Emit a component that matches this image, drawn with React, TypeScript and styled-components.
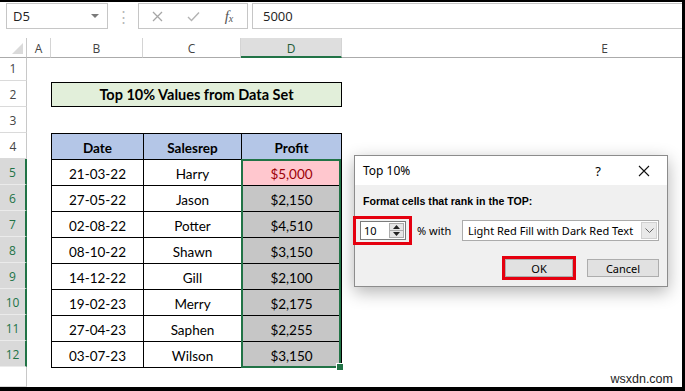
import styled, { createGlobalStyle } from "styled-components";

const GlobalStyle = createGlobalStyle`
  html, body {
    margin: 0;
    padding: 0;
    background: #000;
  }
  * {
    box-sizing: border-box;
  }
`;

const columns = [
  { label: "A", active: false },
  { label: "B", active: false },
  { label: "C", active: false },
  { label: "D", active: true },
  { label: "E", active: false },
];

const records = [
  { date: "21-03-22", rep: "Harry", profit: "$5,000", top: true },
  { date: "27-05-22", rep: "Jason", profit: "$2,150", top: false },
  { date: "02-08-22", rep: "Potter", profit: "$4,510", top: false },
  { date: "08-10-22", rep: "Shawn", profit: "$3,150", top: false },
  { date: "14-12-22", rep: "Gill", profit: "$2,100", top: false },
  { date: "19-02-23", rep: "Merry", profit: "$2,175", top: false },
  { date: "27-04-23", rep: "Saphen", profit: "$2,255", top: false },
  { date: "03-07-23", rep: "Wilson", profit: "$3,150", top: false },
];

const rowNumbers = Array.from({ length: 12 }, (_, i) => i + 1);

const App = () => {
  return (
    <Frame>
      <GlobalStyle />
      <Screen>
        {/* name box + formula bar */}
        <FormulaBar>
          <NameBox>
            <span>D5</span>
            <DropArrow />
          </NameBox>
          <Grip>⋮</Grip>
          <FxGroup>
            <FxSlot>
              <svg width="11" height="11" viewBox="0 0 11 11">
                <path d="M1 1 L10 10 M10 1 L1 10" stroke="#a6a6a6" strokeWidth="1.3" />
              </svg>
            </FxSlot>
            <FxSlot>
              <svg width="13" height="11" viewBox="0 0 13 11">
                <path d="M1 6 L4.5 9.5 L12 1.5" stroke="#b3b3b3" strokeWidth="1.4" fill="none" />
              </svg>
            </FxSlot>
            <FxSlot>
              <FxText>
                f<sub>x</sub>
              </FxText>
            </FxSlot>
          </FxGroup>
          <FormulaInput>5000</FormulaInput>
        </FormulaBar>

        {/* worksheet */}
        <Sheet>
          <Corner>
            <svg width="11" height="11" viewBox="0 0 11 11">
              <polygon points="0,11 11,0 11,11" fill="#dadada" />
            </svg>
          </Corner>
          {columns.map((c) => (
            <ColHeader key={c.label} $active={c.active}>
              {c.label}
            </ColHeader>
          ))}

          {rowNumbers.map((n) => (
            <RowHeader key={n} $row={n + 1} $active={n >= 5}>
              {n}
            </RowHeader>
          ))}
          <RowHeader $row={14} $active={false} />

          <TitleBox>Top 10% Values from Data Set</TitleBox>

          <DataTable>
            <HeadCell>Date</HeadCell>
            <HeadCell>Salesrep</HeadCell>
            <HeadCell>Profit</HeadCell>
            {records.map((r) => (
              <>
                <Cell key={r.date + "d"}>{r.date}</Cell>
                <Cell key={r.date + "r"}>{r.rep}</Cell>
                <ProfitCell key={r.date + "p"} $top={r.top}>
                  {r.profit}
                </ProfitCell>
              </>
            ))}
          </DataTable>

          <Selection />
        </Sheet>

        {/* conditional formatting dialog */}
        <Dialog>
          <DialogTitleBar>
            <DialogTitle>Top 10%</DialogTitle>
            <HelpButton>?</HelpButton>
            <CloseButton>
              <svg width="12" height="12" viewBox="0 0 12 12">
                <path d="M1 1 L11 11 M11 1 L1 11" stroke="#111" strokeWidth="1.1" />
              </svg>
            </CloseButton>
          </DialogTitleBar>
          <DialogBody>
            <Prompt>Format cells that rank in the TOP:</Prompt>
            <ControlsRow>
              <RedMark $pad="2px 3px 2px 4px">
                <Spin>
                  <SpinValue>10</SpinValue>
                  <SpinButtons>
                    <SpinHalf>
                      <svg width="7" height="4" viewBox="0 0 7 4">
                        <polygon points="0,4 3.5,0 7,4" fill="#222" />
                      </svg>
                    </SpinHalf>
                    <SpinHalf>
                      <svg width="7" height="4" viewBox="0 0 7 4">
                        <polygon points="0,0 3.5,4 7,0" fill="#222" />
                      </svg>
                    </SpinHalf>
                  </SpinButtons>
                </Spin>
              </RedMark>
              <WithLabel>% with</WithLabel>
              <Select>
                <SelectValue>Light Red Fill with Dark Red Text</SelectValue>
                <SelectArrow>
                  <svg width="9" height="5" viewBox="0 0 9 5">
                    <path d="M0.5 0.5 L4.5 4.5 L8.5 0.5" stroke="#666" fill="none" />
                  </svg>
                </SelectArrow>
              </Select>
            </ControlsRow>
            <ButtonRow>
              <RedMark $pad="0">
                <DialogButton $w={68}>OK</DialogButton>
              </RedMark>
              <DialogButton $w={72}>Cancel</DialogButton>
            </ButtonRow>
          </DialogBody>
        </Dialog>

        <Watermark>wsxdn.com</Watermark>
      </Screen>
    </Frame>
  );
};

export default App;

// outer black border of the capture
const Frame = styled.div`
  width: 685px;
  height: 391px;
  background: #000;
  padding: 2px 3px 4px 0;
`;

const Screen = styled.div`
  position: relative;
  width: 100%;
  height: 100%;
  background: #fff;
  overflow: hidden;
  display: flex;
  flex-direction: column;
`;

// formula bar
const FormulaBar = styled.div`
  display: flex;
  align-items: center;
  height: 29px;
  padding: 1px 0 2px 6px;
  font-family: "Open Sans", "Noto Sans", sans-serif;
  font-size: 13px;
  color: #222;
`;

const NameBox = styled.div`
  width: 102px;
  height: 26px;
  border: 1px solid #c6c6c6;
  display: flex;
  align-items: center;
  justify-content: space-between;
  padding: 0 8px 0 6px;
`;

const DropArrow = styled.span`
  width: 0;
  height: 0;
  border-left: 4px solid transparent;
  border-right: 4px solid transparent;
  border-top: 4px solid #7a7a7a;
`;

const Grip = styled.div`
  width: 30px;
  text-align: center;
  color: #b8b8b8;
  font-size: 15px;
`;

const FxGroup = styled.div`
  width: 110px;
  height: 26px;
  border: 1px solid #c6c6c6;
  display: flex;
  align-items: center;
`;

const FxSlot = styled.div`
  width: 36px;
  display: flex;
  justify-content: center;
  align-items: center;
`;

const FxText = styled.span`
  font-family: "Liberation Serif", serif;
  font-style: italic;
  font-size: 15px;
  color: #555;
  sub {
    font-size: 10px;
    vertical-align: -1px;
  }
`;

const FormulaInput = styled.div`
  flex: 1;
  height: 26px;
  margin-left: 4px;
  border: 1px solid #c6c6c6;
  border-right: none;
  display: flex;
  align-items: center;
  padding-left: 10px;
`;

// worksheet grid
const Sheet = styled.div`
  position: relative;
  margin-top: 7px;
  display: grid;
  grid-template-columns: 27px 24px 92px 98px 101px 526px;
  grid-template-rows: 20px 23px repeat(11, 26px) 1fr;
  flex: 1;
  font-family: "Lato", "Open Sans", sans-serif;
  font-size: 13.5px;
  color: #000;
`;

const Corner = styled.div`
  grid-row: 1;
  grid-column: 1;
  display: flex;
  justify-content: flex-end;
  align-items: flex-end;
  padding: 0 3px 3px 0;
  border-right: 1px solid #c8c8c8;
  border-bottom: 1px solid #ababab;
`;

const ColHeader = styled.div<{ $active: boolean }>`
  grid-row: 1;
  display: flex;
  align-items: center;
  justify-content: center;
  padding-top: 2px;
  font-family: "Open Sans", sans-serif;
  font-size: 12px;
  color: ${(p) => (p.$active ? "#1d5b36" : "#444")};
  background: ${(p) => (p.$active ? "#dedede" : "#fff")};
  border-right: 1px solid #d4d4d4;
  border-bottom: ${(p) => (p.$active ? "2px solid #217346" : "1px solid #ababab")};
`;

const RowHeader = styled.div<{ $row: number; $active: boolean }>`
  grid-row: ${(p) => p.$row};
  grid-column: 1;
  display: flex;
  align-items: flex-end;
  justify-content: center;
  padding-bottom: 3px;
  font-family: "Open Sans", sans-serif;
  font-size: 12px;
  color: ${(p) => (p.$active ? "#217346" : "#444")};
  background: ${(p) => (p.$active ? "#d9d9d9" : "#fff")};
  border-bottom: 1px solid ${(p) => (p.$active ? "#ebebeb" : "#dadada")};
  border-right: ${(p) => (p.$active ? "2px solid #217346" : "1px solid #c8c8c8")};
`;

const TitleBox = styled.div`
  grid-row: 3;
  grid-column: 3 / span 3;
  margin-top: 1px;
  display: flex;
  align-items: center;
  justify-content: center;
  background: #e2efda;
  border: 1px solid #000;
  font-size: 14.5px;
  font-weight: 700;
`;

const DataTable = styled.div`
  grid-row: 5 / span 9;
  grid-column: 3 / span 3;
  align-self: start;
  height: 235px;
  display: grid;
  grid-template-columns: 91px 97px 99px;
  grid-template-rows: repeat(9, 25px);
  gap: 1px;
  background: #000;
  border: 1px solid #000;
`;

const Cell = styled.div`
  background: #fff;
  display: flex;
  align-items: center;
  justify-content: center;
  padding-top: 2px;
`;

const HeadCell = styled(Cell)`
  background: #b4c6e7;
  font-weight: 700;
`;

const ProfitCell = styled(Cell)<{ $top: boolean }>`
  background: ${(p) => (p.$top ? "#ffc7ce" : "#c6c6c6")};
  color: ${(p) => (p.$top ? "#9c0006" : "#000")};
`;

// selected range D5:D12
const Selection = styled.div`
  grid-row: 6 / span 8;
  grid-column: 5;
  width: 100px;
  height: 209px;
  border: 2px solid #217346;
  position: relative;
  pointer-events: none;
  &::after {
    content: "";
    position: absolute;
    right: -5px;
    bottom: -5px;
    width: 6px;
    height: 6px;
    background: #217346;
    border: 1px solid #fff;
  }
`;

// dialog
const Dialog = styled.div`
  position: absolute;
  left: 354px;
  top: 153px;
  width: 314px;
  height: 132px;
  background: #f0f0f0;
  border: 1px solid #8c8c8c;
  box-shadow: 0 5px 16px rgba(0, 0, 0, 0.3);
  font-family: "Noto Sans", "Open Sans", sans-serif;
  font-size: 11px;
  color: #000;
  display: flex;
  flex-direction: column;
`;

const DialogTitleBar = styled.div`
  height: 29px;
  background: #fff;
  display: flex;
  align-items: center;
  padding-left: 8px;
`;

const DialogTitle = styled.div`
  flex: 1;
  font-size: 12px;
`;

const HelpButton = styled.div`
  width: 30px;
  text-align: center;
  font-size: 13px;
`;

const CloseButton = styled.div`
  width: 46px;
  margin-left: 8px;
  display: flex;
  justify-content: center;
`;

const DialogBody = styled.div`
  padding: 8px 8px 0 8px;
  display: flex;
  flex-direction: column;
`;

const Prompt = styled.div`
  height: 16px;
  line-height: 16px;
  font-family: "Liberation Sans", Arial, sans-serif;
  font-size: 10.6px;
  font-weight: 700;
`;

const ControlsRow = styled.div`
  margin: 7px 0 0 -10px;
  display: flex;
  align-items: center;
  gap: 5px;
`;

const RedMark = styled.div<{ $pad: string }>`
  border: 3px solid #e5000f;
  padding: ${(p) => p.$pad};
  display: flex;
`;

const Spin = styled.div`
  width: 46px;
  height: 19px;
  background: #fff;
  border: 1px solid #7a7a7a;
  display: flex;
`;

const SpinValue = styled.div`
  flex: 1;
  padding-left: 3px;
  line-height: 17px;
`;

const SpinButtons = styled.div`
  width: 15px;
  margin: 1px 1px 1px 0;
  display: flex;
  flex-direction: column;
  background: #e5e5e5;
  border: 1px solid #acacac;
`;

const SpinHalf = styled.div`
  flex: 1;
  display: flex;
  align-items: center;
  justify-content: center;
  & + & {
    border-top: 1px solid #acacac;
  }
`;

const WithLabel = styled.div`
  width: 40px;
`;

const Select = styled.div`
  width: 197px;
  height: 21px;
  background: #fff;
  border: 1px solid #ababab;
  display: flex;
  align-items: center;
  padding: 0 1px 0 5px;
`;

const SelectValue = styled.div`
  flex: 1;
  white-space: nowrap;
`;

const SelectArrow = styled.div`
  width: 16px;
  height: 17px;
  background: #e9e9e9;
  border: 1px solid #d0d0d0;
  display: flex;
  align-items: center;
  justify-content: center;
`;

const ButtonRow = styled.div`
  margin-top: 11px;
  display: flex;
  justify-content: flex-end;
  align-items: center;
  gap: 11px;
`;

const DialogButton = styled.div<{ $w: number }>`
  width: ${(p) => p.$w}px;
  height: 18px;
  background: #e1e1e1;
  border: 1px solid #adadad;
  display: flex;
  align-items: center;
  justify-content: center;
`;

const Watermark = styled.div`
  position: absolute;
  right: 9px;
  bottom: 1px;
  font-family: "Liberation Sans", Arial, sans-serif;
  font-size: 12.5px;
  color: #222;
`;
